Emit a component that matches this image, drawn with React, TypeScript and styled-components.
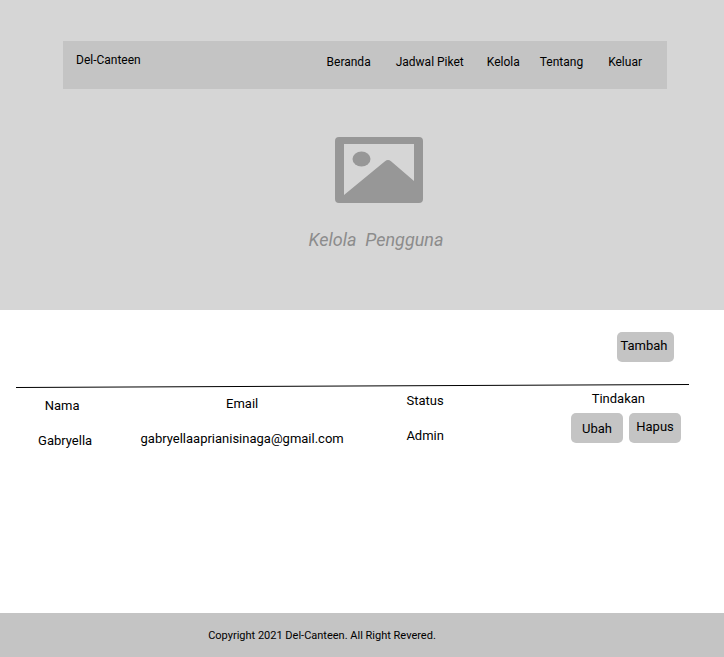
import React from "react";
import styled, { createGlobalStyle } from "styled-components";

const GlobalStyle = createGlobalStyle`
  *, *::before, *::after { box-sizing: border-box; }
  body {
    margin: 0;
    background: #fff;
    color: #000;
    font-family: Roboto, "Liberation Sans", sans-serif;
    font-size: 13px;
    line-height: 15px;
  }
`;

const Page = styled.div`
  display: flex;
  flex-direction: column;
  min-height: 100vh;
`;

const Hero = styled.header`
  padding: 41px 57px 58px 63px;
  background: #d6d6d6;
`;

const NavBar = styled.nav`
  display: flex;
  justify-content: space-between;
  align-items: flex-start;
  min-height: 48px;
  padding: 12px 25px 12px 13px;
  background: #c4c4c4;
  font-size: 12px;
`;

const Brand = styled.a`
  color: inherit;
  text-decoration: none;
`;

const NavList = styled.ul`
  display: flex;
  margin: 0;
  padding: 2px 0 0;
  list-style: none;
`;

const NavItem = styled.li<{ $gap: number }>`
  margin-left: ${(p) => p.$gap}px;
`;

const NavLink = styled.a`
  color: inherit;
  text-decoration: none;
  white-space: nowrap;
`;

const Banner = styled.div`
  display: flex;
  flex-direction: column;
  align-items: center;
  gap: 25px;
  padding: 48px 0 0 28px;
`;

const Picture = styled.svg`
  display: block;
  width: 88px;
  height: 66px;
`;

const Title = styled.h1`
  margin: 0;
  padding-right: 6px;
  color: #8c8c8c;
  font-size: 18px;
  font-style: italic;
  font-weight: 400;
  line-height: 24px;
  white-space: pre;
`;

const Content = styled.main`
  flex: 1;
  padding: 22px 35px 24px 16px;
`;

const Toolbar = styled.div`
  display: flex;
  justify-content: flex-end;
  padding: 0 15px 22px 0;
`;

const Button = styled.button<{ $lift?: number }>`
  width: 52px;
  height: 30px;
  padding: 0 0 ${(p) => p.$lift ?? 0}px;
  border: 0;
  border-radius: 5px;
  background: #c4c4c4;
  color: inherit;
  font: inherit;
  text-align: center;
  cursor: pointer;
`;

const AddButton = styled(Button)`
  width: 57px;
  padding-right: 3px;
`;

const Rule = styled.svg`
  display: block;
  width: 100%;
  height: 4px;
`;

const Table = styled.table`
  width: 100%;
  table-layout: fixed;
  border-collapse: collapse;
`;

const Column = styled.col<{ $share: number }>`
  width: ${(p) => p.$share}%;
`;

const Heading = styled.th<{ $drop: number }>`
  height: 25px;
  padding: ${(p) => p.$drop}px 0 0;
  font-weight: 400;
  text-align: center;
  vertical-align: top;
  &:last-child {
    padding-right: 44px;
    text-align: right;
  }
`;

const Cell = styled.td<{ $drop: number }>`
  padding: ${(p) => p.$drop + 10}px 0 0;
  text-align: center;
  vertical-align: top;
  &:first-child {
    padding-left: 6px;
  }
`;

const ActionCell = styled.td`
  padding: 0 8px 0 0;
  vertical-align: top;
`;

const Actions = styled.div`
  display: flex;
  justify-content: flex-end;
  gap: 6px;
`;

const Footer = styled.footer`
  padding: 15px 80px 14px 0;
  background: #c4c4c4;
  font-size: 11px;
  text-align: center;
`;

const links = [
  { label: "Beranda", gap: 0 },
  { label: "Jadwal Piket", gap: 25 },
  { label: "Kelola", gap: 23 },
  { label: "Tentang", gap: 20 },
  { label: "Keluar", gap: 25 },
];

const users = [
  { name: "Gabryella", email: "gabryellaaprianisinaga@gmail.com", status: "Admin" },
];

export default function App() {
  return (
    <Page>
      <GlobalStyle />
      <Hero>
        <NavBar>
          <Brand href="#">Del-Canteen</Brand>
          <NavList>
            {links.map((link) => (
              <NavItem key={link.label} $gap={link.gap}>
                <NavLink href="#">{link.label}</NavLink>
              </NavItem>
            ))}
          </NavList>
        </NavBar>
        <Banner>
          <Picture viewBox="0 0 88 66" fill="#979797" aria-hidden="true">
            <path
              fillRule="evenodd"
              d="M4 0H84Q88 0 88 4V62Q88 66 84 66H4Q0 66 0 62V4Q0 0 4 0ZM9 7V58L50 24.200Q53 21.800 56 24.200L79 44V7Z"
            />
            <ellipse cx="26.500" cy="22" rx="9" ry="7.500" />
          </Picture>
          <Title>{"Kelola  Pengguna"}</Title>
        </Banner>
      </Hero>
      <Content>
        <Toolbar>
          <AddButton type="button" $lift={3}>Tambah</AddButton>
        </Toolbar>
        <Rule viewBox="0 0 673 4" preserveAspectRatio="none" aria-hidden="true">
          <line x1="0" y1="3.500" x2="673" y2="0.500" stroke="#000" />
        </Rule>
        <Table>
          <colgroup>
            <Column $share={13.7} />
            <Column $share={39.8} />
            <Column $share={14.6} />
            <Column $share={31.9} />
          </colgroup>
          <thead>
            <tr>
              <Heading scope="col" $drop={10}>Nama</Heading>
              <Heading scope="col" $drop={8}>Email</Heading>
              <Heading scope="col" $drop={5}>Status</Heading>
              <Heading scope="col" $drop={3}>Tindakan</Heading>
            </tr>
          </thead>
          <tbody>
            {users.map((user) => (
              <tr key={user.email}>
                <Cell $drop={10}>{user.name}</Cell>
                <Cell $drop={8}>{user.email}</Cell>
                <Cell $drop={5}>{user.status}</Cell>
                <ActionCell>
                  <Actions>
                    <Button type="button">Ubah</Button>
                    <Button type="button" $lift={3}>Hapus</Button>
                  </Actions>
                </ActionCell>
              </tr>
            ))}
          </tbody>
        </Table>
      </Content>
      <Footer>Copyright 2021 Del-Canteen. All Right Revered.</Footer>
    </Page>
  );
}
